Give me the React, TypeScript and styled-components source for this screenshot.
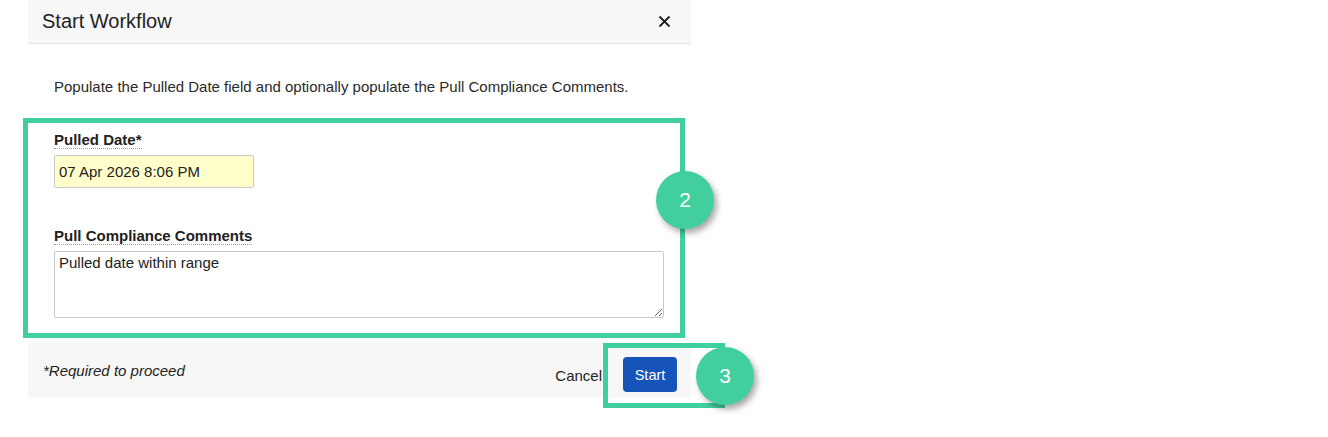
import React from 'react';
import styled, { createGlobalStyle } from 'styled-components';

const GlobalStyle = createGlobalStyle`
  body {
    margin: 0;
    background: #fff;
    font-family: 'Liberation Sans', Arial, sans-serif;
    color: #222;
  }
`;

const accent = '#41cf9e';

const Page = styled.div`
  min-height: 437px;
  padding-bottom: 40px;
  box-sizing: border-box;
`;

const Dialog = styled.div`
  position: relative;
  margin-left: 28px;
  width: 663px;
  background: #fff;
`;

const Header = styled.div`
  display: flex;
  align-items: center;
  justify-content: space-between;
  height: 43px;
  padding: 0 20px 0 14px;
  background: #f7f7f7;
  border-bottom: 1px solid #e6e6e6;
`;

const Title = styled.h2`
  margin: 0;
  font-size: 20px;
  font-weight: normal;
  line-height: 43px;
  color: #222;
`;

const CloseButton = styled.button`
  display: flex;
  align-items: center;
  justify-content: center;
  width: 14px;
  height: 14px;
  padding: 0;
  border: none;
  background: none;
  cursor: pointer;
`;

const Body = styled.div`
  padding: 34px 27px 24px 26px;
`;

const Intro = styled.p`
  margin: 0 0 35px;
  font-size: 15px;
  line-height: 18px;
  color: #2a2a2a;
`;

const Field = styled.div<{ $gap?: number }>`
  display: flex;
  flex-direction: column;
  align-items: flex-start;
  gap: 6px;
  margin-bottom: ${(p) => p.$gap ?? 0}px;
`;

const Label = styled.label`
  display: inline-block;
  font-size: 15px;
  font-weight: bold;
  line-height: 17px;
  color: #222;
  border-bottom: 1px dotted #999;
`;

const DateInput = styled.input`
  box-sizing: border-box;
  width: 200px;
  height: 33px;
  padding: 0 4px;
  font-family: inherit;
  font-size: 15px;
  color: #222;
  background: #ffffcc;
  border: 1px solid #c9c9c9;
  border-radius: 2px;
  outline: none;
`;

const Comments = styled.textarea`
  box-sizing: border-box;
  width: 610px;
  height: 67px;
  padding: 2px 4px;
  font-family: inherit;
  font-size: 15px;
  line-height: 18px;
  color: #222;
  border: 1px solid #c9c9c9;
  border-radius: 2px;
  outline: none;
`;

const Footer = styled.div`
  display: flex;
  align-items: flex-start;
  justify-content: space-between;
  height: 56px;
  box-sizing: border-box;
  padding: 0 14px 0 15px;
  background: #f7f7f7;
`;

const Required = styled.span`
  margin-top: 20px;
  font-size: 15px;
  font-style: italic;
  line-height: 18px;
  color: #222;
`;

const Actions = styled.div`
  display: flex;
  align-items: center;
  gap: 21px;
  margin-top: 15px;
`;

const LinkButton = styled.button`
  padding: 0;
  border: none;
  background: none;
  font-family: inherit;
  font-size: 15px;
  line-height: 18px;
  margin-top: 3px;
  color: #222;
  cursor: pointer;
`;

const PrimaryButton = styled.button`
  width: 54px;
  height: 35px;
  padding: 0;
  border: none;
  border-radius: 4px;
  background: #1654b9;
  color: #fff;
  font-family: inherit;
  font-size: 14.5px;
  cursor: pointer;
`;

const Highlight = styled.div<{ $x: number; $y: number; $w: number; $h: number }>`
  position: absolute;
  left: ${(p) => p.$x}px;
  top: ${(p) => p.$y}px;
  width: ${(p) => p.$w}px;
  height: ${(p) => p.$h}px;
  box-sizing: border-box;
  border: 5px solid ${accent};
  pointer-events: none;
`;

const StepBadge = styled.div<{ $x: number; $y: number }>`
  position: absolute;
  left: ${(p) => p.$x}px;
  top: ${(p) => p.$y}px;
  width: 58px;
  height: 58px;
  border-radius: 50%;
  background: ${accent};
  box-shadow: 3px 4px 6px rgba(0, 0, 0, 0.35);
  display: flex;
  align-items: center;
  justify-content: center;
  color: #fff;
  font-size: 21px;
`;

const CloseIcon = () => (
  <svg width="13" height="13" viewBox="0 0 13 13">
    <path d="M1.5 1.5 L11.5 11.5 M11.5 1.5 L1.5 11.5" stroke="#1e1e1e" strokeWidth="1.8" />
  </svg>
);

const App = () => {
  return (
    <Page>
      <GlobalStyle />
      <Dialog>
        <Header>
          <Title>Start Workflow</Title>
          <CloseButton aria-label="Close">
            <CloseIcon />
          </CloseButton>
        </Header>
        <Body>
          <Intro>Populate the Pulled Date field and optionally populate the Pull Compliance Comments.</Intro>
          <Field $gap={39}>
            <Label>Pulled Date*</Label>
            <DateInput defaultValue="07 Apr 2026 8:06 PM" />
          </Field>
          <Field>
            <Label>Pull Compliance Comments</Label>
            <Comments defaultValue="Pulled date within range" />
          </Field>
        </Body>
        <Footer>
          <Required>*Required to proceed</Required>
          <Actions>
            <LinkButton>Cancel</LinkButton>
            <PrimaryButton>Start</PrimaryButton>
          </Actions>
        </Footer>

        <Highlight $x={-5} $y={118} $w={662} $h={220} />
        <Highlight $x={575} $y={343} $w={122} $h={65} />
        <StepBadge $x={628} $y={171}>2</StepBadge>
        <StepBadge $x={668} $y={347}>3</StepBadge>
      </Dialog>
    </Page>
  );
};

export default App;
